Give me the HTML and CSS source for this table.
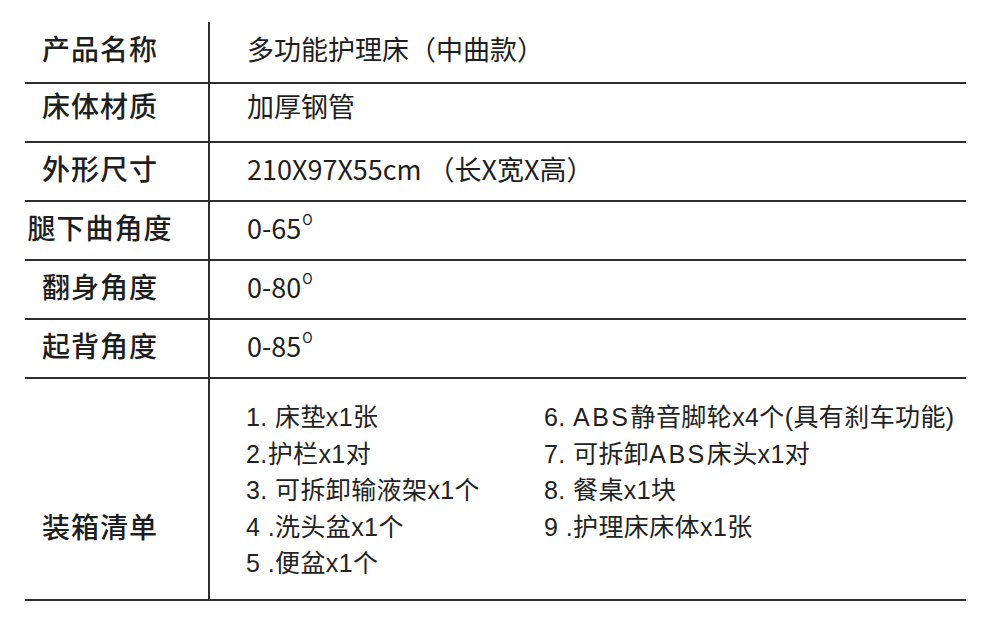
FILE: index.html
```html
<!DOCTYPE html>
<html lang="zh">
<head>
<meta charset="utf-8">
<title>产品参数</title>
<link rel="stylesheet" href="styles.css">
</head>
<body>
<div class="sheet">
  <div class="row first">
    <div class="label">产品名称</div>
    <div class="value">多功能护理床（中曲款）</div>
  </div>
  <div class="row second">
    <div class="label">床体材质</div>
    <div class="value">加厚钢管</div>
  </div>
  <div class="row">
    <div class="label">外形尺寸</div>
    <div class="value">210X97X55cm<span class="paren">（</span>长X宽X高）</div>
  </div>
  <div class="row">
    <div class="label">腿下曲角度</div>
    <div class="value">0-65<sup class="deg">O</sup></div>
  </div>
  <div class="row">
    <div class="label">翻身角度</div>
    <div class="value">0-80<sup class="deg">O</sup></div>
  </div>
  <div class="row">
    <div class="label">起背角度</div>
    <div class="value">0-85<sup class="deg">O</sup></div>
  </div>
  <div class="row list-row">
    <div class="label list-label">装箱清单</div>
    <div class="value list">
      <ul class="col">
        <li>1. 床垫x1张</li>
        <li>2.护栏x1对</li>
        <li>3. 可拆卸输液架x1个</li>
        <li>4 .洗头盆x1个</li>
        <li>5 .便盆x1个</li>
      </ul>
      <ul class="col">
        <li>6. <span class="abs">ABS</span>静音脚轮x4个(具有刹车功能)</li>
        <li>7. 可拆卸<span class="abs">ABS</span>床头x1对</li>
        <li>8. 餐桌x1块</li>
        <li>9 .护理床床体x1张</li>
      </ul>
    </div>
  </div>
</div>
</body>
</html>
```

FILE: styles.css
```css
html, body {
  margin: 0;
  padding: 0;
  background: #ffffff;
}

body {
  width: 990px;
  height: 621px;
  overflow: hidden;
  color: #1e1e1e;
  font-family: "Noto Sans CJK SC", "Noto Sans", sans-serif;
}

.sheet {
  margin: 22px 0 0 25px;
  width: 941px;
}

.row {
  display: flex;
  height: 57px;
  border-bottom: 2px solid #2e2e2e;
}

.row.first {
  height: 60px;
}

.label {
  width: 150px;
  padding-right: 33px;
  padding-bottom: 7px;
  border-right: 2px solid #2e2e2e;
  display: flex;
  align-items: center;
  justify-content: center;
  font-size: 28px;
  font-weight: 500;
  letter-spacing: 1px;
  white-space: nowrap;
}

.value {
  flex: 1;
  display: flex;
  align-items: center;
  padding-left: 37px;
  padding-bottom: 7px;
  font-size: 27px;
  white-space: nowrap;
}

.row.first .label,
.row.first .value {
  padding-bottom: 8px;
}

.row.second .label,
.row.second .value {
  padding-bottom: 15px;
}

.paren {
  margin-left: 6px;
}

.deg {
  font-size: 14px;
  vertical-align: 0;
  position: relative;
  top: -8px;
  margin-left: 1px;
}

.list-row {
  height: 220px;
}

.list-label {
  align-items: flex-start;
  padding-top: 127px;
  padding-bottom: 0;
}

.value.list {
  align-items: flex-start;
  padding-top: 20px;
  padding-bottom: 0;
  padding-left: 36px;
  font-family: "Liberation Sans", "Noto Sans CJK SC", sans-serif;
  font-size: 25px;
  letter-spacing: 0.4px;
  color: #222;
}

.abs {
  letter-spacing: 2.5px;
}

.col {
  list-style: none;
  margin: 0;
  padding: 0;
  line-height: 36.5px;
}

.col:first-child {
  width: 298px;
}
```
